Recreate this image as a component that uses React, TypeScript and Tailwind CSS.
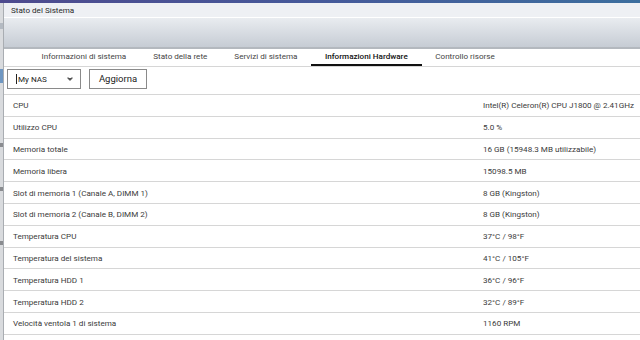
import { ChevronDown } from 'lucide-react';

const tabs = [
    { label: "Informazioni di sistema", active: false },
    { label: "Stato della rete", active: false },
    { label: "Servizi di sistema", active: false },
    { label: "Informazioni Hardware", active: true },
    { label: "Controllo risorse", active: false },
];

const rows = [
    ["CPU", "Intel(R) Celeron(R) CPU J1800 @ 2.41GHz"],
    ["Utilizzo CPU", "5.0 %"],
    ["Memoria totale", "16 GB (15948.3 MB utilizzabile)"],
    ["Memoria libera", "15098.5 MB"],
    ["Slot di memoria 1 (Canale A, DIMM 1)", "8 GB (Kingston)"],
    ["Slot di memoria 2 (Canale B, DIMM 2)", "8 GB (Kingston)"],
    ["Temperatura CPU", "37°C / 98°F"],
    ["Temperatura del sistema", "41°C / 105°F"],
    ["Temperatura HDD 1", "36°C / 96°F"],
    ["Temperatura HDD 2", "32°C / 89°F"],
    ["Velocità ventola 1 di sistema", "1160 RPM"],
    ["", ""],
];

export default function App() {
    return (
        <div className="w-[640px] h-[340px] flex flex-col overflow-hidden bg-white font-['Roboto',sans-serif] text-[#3a3a3a]">
            {/* desktop bar behind the window */}
            <div className="h-[3px] shrink-0 bg-gradient-to-r from-[#4d4a8e] via-[#45599a] to-[#3c6e9e]"></div>

            <div className="flex flex-1 min-h-0">
                {/* sliver of the desktop on the left */}
                <div className="w-[4px] shrink-0 flex flex-col bg-[#d9dbde] border-r border-[#a9adb2]">
                    <div className="h-[20px]"></div>
                    <div className="h-[6px] bg-[#b4bac2]"></div>
                    <div className="h-[40px]"></div>
                    <div className="h-[14px] bg-[#6f97c2]"></div>
                    <div className="h-[60px]"></div>
                    <div className="h-[4px] bg-[#8a8c90]"></div>
                    <div className="h-[40px]"></div>
                    <div className="h-[4px] bg-[#8a8c90]"></div>
                    <div className="h-[50px]"></div>
                    <div className="h-[4px] bg-[#8a8c90]"></div>
                </div>

                <div className="flex-1 flex flex-col min-w-0">
                    {/* title bar */}
                    <div className="h-[14px] shrink-0 flex items-center pl-[7px] bg-[#eef0f4] text-[8.1px] text-[#2a2a2a] whitespace-nowrap">
                        Stato del Sistema
                    </div>

                    {/* toolbar */}
                    <div className="h-[32px] shrink-0 border-t border-white border-b-2 border-b-[#b3b8be] bg-gradient-to-b from-[#e9ecf0] to-[#c6ccd4]"></div>

                    {/* tabs */}
                    <div className="h-[18px] shrink-0 flex items-stretch pl-[24px] border-b border-[#d6d6d6] text-[8.1px] whitespace-nowrap">
                        {tabs.map((tab) => (
                            <div
                                key={tab.label}
                                className={
                                    tab.active
                                        ? "px-[14px] flex items-center border-b-2 border-[#111] text-[#111] font-medium"
                                        : "px-[13.5px] flex items-center border-b-2 border-transparent text-[#444]"
                                }
                            >
                                {tab.label}
                            </div>
                        ))}
                    </div>

                    {/* controls */}
                    <div className="h-[28px] shrink-0 flex items-start gap-[8px] pl-[3px] pt-[2px] border-b border-[#d6d6d6]">
                        <div className="w-[74px] h-[20px] flex items-center justify-between pl-[8px] pr-[6px] border border-[#8a8a8a] text-[8.1px] text-[#222]">
                            <span className="border-l border-[#222] pl-[1px] leading-[10px]">My NAS</span>
                            <ChevronDown className="w-[8px] h-[8px] fill-[#555] text-[#555]" strokeWidth={4} />
                        </div>
                        <div className="w-[58px] h-[20px] flex items-center justify-center border border-[#8a8a8a] text-[9.5px] text-[#222]">
                            Aggiorna
                        </div>
                    </div>

                    {/* hardware info */}
                    <div className="flex flex-col">
                        {rows.map(([label, value], i) => (
                            <div key={i} className="h-[21.8px] shrink-0 grid grid-cols-[470px_1fr] items-center pl-[9px] border-b border-[#d6d6d6] text-[8.1px] whitespace-nowrap">
                                <span>{label}</span>
                                <span>{value}</span>
                            </div>
                        ))}
                    </div>
                </div>
            </div>
        </div>
    );
}
